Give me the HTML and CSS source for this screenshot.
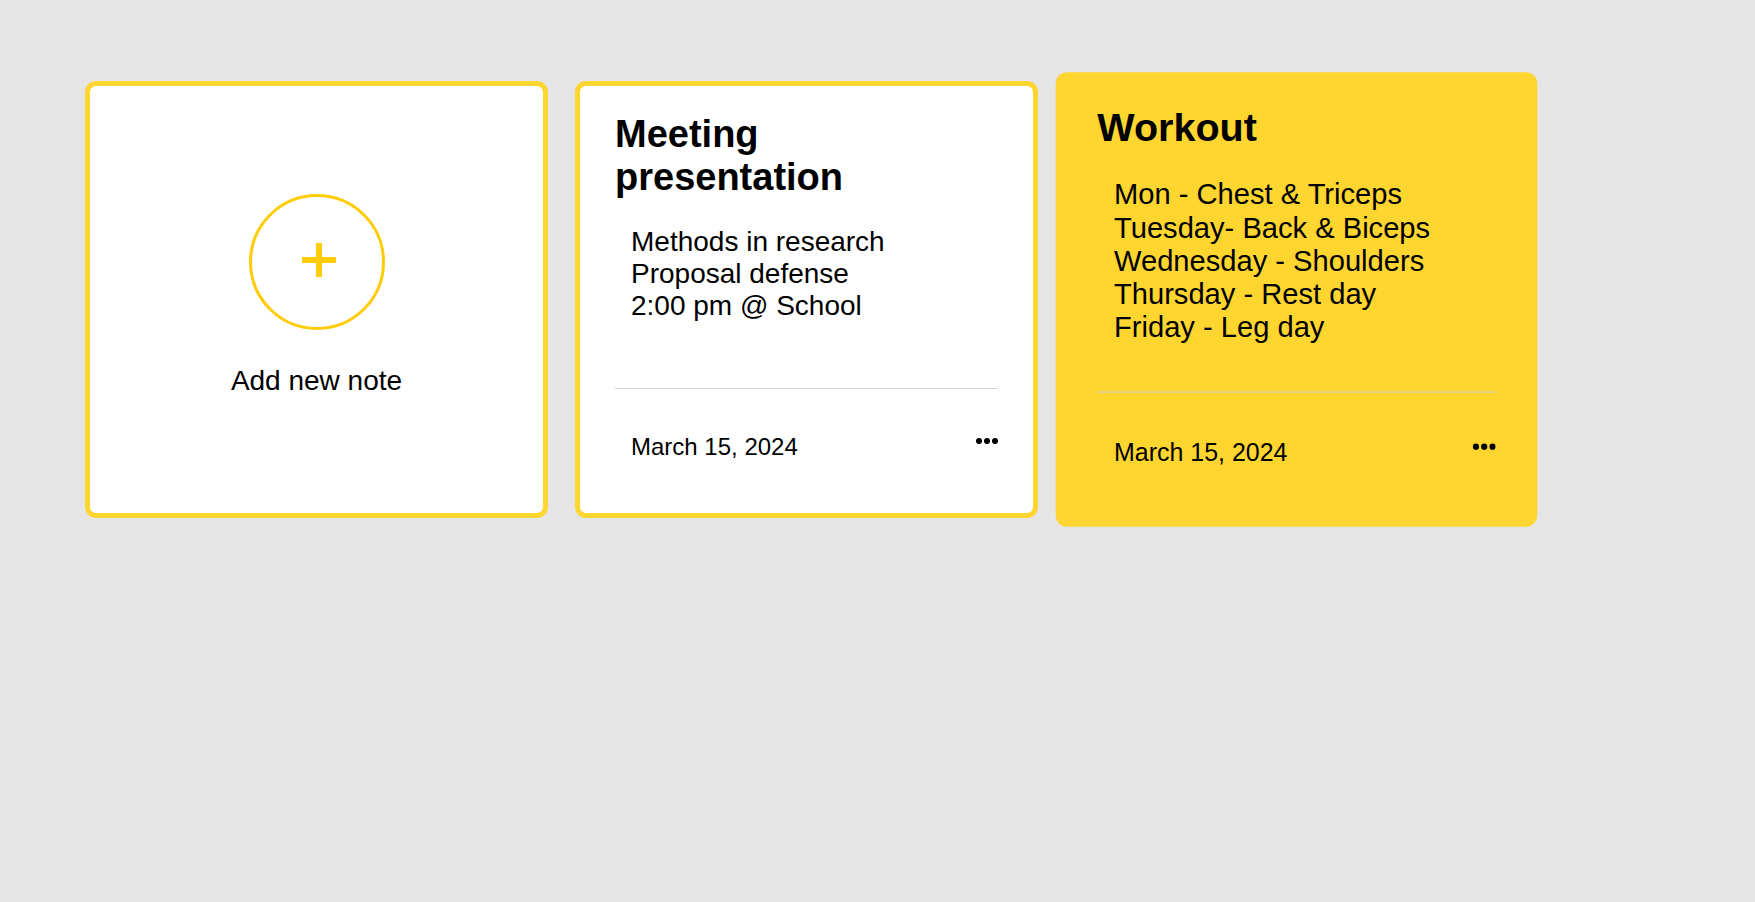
FILE: index.html
```html
<!DOCTYPE html>
<html lang="en">
<head>
<meta charset="utf-8">
<title>Notes</title>
<link rel="stylesheet" href="styles.css">
</head>
<body>
<main class="board">
  <div class="card card-add">
    <div class="add-circle">
      <svg class="add-plus" width="34" height="34" viewBox="0 0 34 34" aria-hidden="true">
        <rect x="0" y="14" width="34" height="6" fill="currentColor"/>
        <rect x="14" y="0" width="6" height="34" fill="currentColor"/>
      </svg>
    </div>
    <p class="add-label">Add new note</p>
  </div>

  <article class="card">
    <h2 class="note-title">Meeting presentation</h2>
    <p class="note-body">Methods in research<br>Proposal defense<br>2:00 pm @ School</p>
    <div class="note-footer">
      <span class="note-date">March 15, 2024</span>
      <span class="note-menu" aria-label="More">
        <svg width="22" height="16" viewBox="0 0 22 16" aria-hidden="true">
          <circle cx="3" cy="8" r="3" fill="currentColor"/>
          <circle cx="11" cy="8" r="3" fill="currentColor"/>
          <circle cx="19" cy="8" r="3" fill="currentColor"/>
        </svg>
      </span>
    </div>
  </article>

  <article class="card card-yellow card-raised">
    <h2 class="note-title">Workout</h2>
    <p class="note-body">Mon - Chest &amp; Triceps<br>Tuesday- Back &amp; Biceps<br>Wednesday - Shoulders<br>Thursday - Rest day<br>Friday - Leg day</p>
    <div class="note-footer">
      <span class="note-date">March 15, 2024</span>
      <span class="note-menu" aria-label="More">
        <svg width="22" height="16" viewBox="0 0 22 16" aria-hidden="true">
          <circle cx="3" cy="8" r="3" fill="currentColor"/>
          <circle cx="11" cy="8" r="3" fill="currentColor"/>
          <circle cx="19" cy="8" r="3" fill="currentColor"/>
        </svg>
      </span>
    </div>
  </article>
</main>
</body>
</html>
```

FILE: styles.css
```css
* {
  box-sizing: border-box;
}

html, body {
  margin: 0;
  padding: 0;
}

body {
  background: #e5e5e5;
  font-family: "Liberation Sans", Arial, sans-serif;
  color: #000;
  min-height: 902px;
}

.board {
  display: flex;
  align-items: flex-start;
  gap: 27px;
  padding: 81px 85px;
}

.card {
  width: 463px;
  height: 437px;
  flex: 0 0 463px;
  background: #fff;
  border: 5px solid #ffd530;
  border-radius: 11px;
  padding: 27px 35px 26px;
  display: flex;
  flex-direction: column;
}

.card-yellow {
  background: #ffd530;
}

.card-raised {
  transform: scale(1.04);
}

.card-add {
  align-items: center;
  justify-content: center;
  padding-top: 26px;
  padding-bottom: 35px;
}

.add-circle {
  width: 136px;
  height: 136px;
  border: 3px solid #ffcc0a;
  border-radius: 50%;
  display: flex;
  align-items: center;
  justify-content: center;
  color: #ffcc0a;
}

.add-plus {
  display: block;
  margin-left: 5px;
  margin-bottom: 3px;
}

.add-label {
  margin: 35px 0 0;
  font-size: 28px;
  line-height: normal;
}

.note-title {
  margin: 0;
  padding-right: 24px;
  font-size: 38px;
  font-weight: bold;
  line-height: normal;
}

.note-body {
  flex: 1;
  margin: 27px 0 0;
  padding-left: 16px;
  font-size: 28px;
  line-height: normal;
}

.note-footer {
  border-top: 1px solid #d3d3d3;
  padding: 44px 0 26px 16px;
  display: flex;
  justify-content: space-between;
  align-items: flex-start;
}

.note-date {
  font-size: 24px;
  line-height: normal;
}

.note-menu {
  display: block;
  color: #000;
  line-height: 0;
}

.note-menu svg {
  display: block;
}
```
